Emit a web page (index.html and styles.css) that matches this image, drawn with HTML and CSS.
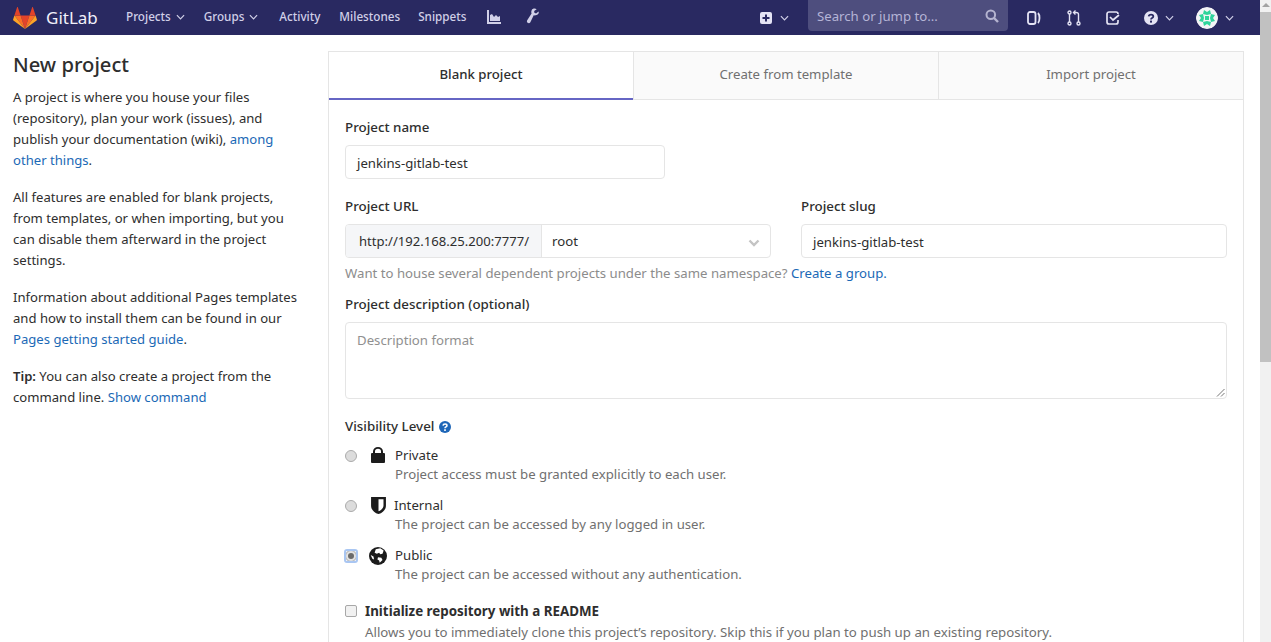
FILE: index.html
```html
<!DOCTYPE html>
<html lang="en">
<head>
<meta charset="utf-8">
<title>New project</title>
<link rel="stylesheet" href="styles.css">
</head>
<body>
<div class="page">
  <div class="viewport">
    <header class="nav">
      <a class="brand">
        <svg class="logo" viewBox="0 0 24 22" width="24" height="24"><path fill="#e24329" d="M12 22l4.400-13.600H7.600z"/><path fill="#fc6d26" d="M12 22L7.600 8.400H1.400z"/><path fill="#fca326" d="M1.400 8.400L.1 12.500c-.1.4 0 .8.3 1L12 22z"/><path fill="#e24329" d="M1.400 8.400h6.200L4.900.4c-.1-.4-.7-.4-.9 0z"/><path fill="#fc6d26" d="M12 22l4.400-13.600h6.200z"/><path fill="#fca326" d="M22.600 8.400l1.300 4.100c.1.4 0 .8-.3 1L12 22z"/><path fill="#e24329" d="M22.600 8.400h-6.200L19.100.4c.1-.4.7-.4.9 0z"/></svg>
        <span class="brand-name">GitLab</span>
      </a>
      <nav class="links">
        <a class="link">Projects <svg class="chev" viewBox="0 0 10 6"><path d="M1 1l4 4 4-4"/></svg></a>
        <a class="link groups">Groups <svg class="chev" viewBox="0 0 10 6"><path d="M1 1l4 4 4-4"/></svg></a>
        <a class="link">Activity</a>
        <a class="link milestones">Milestones</a>
        <a class="link snippets">Snippets</a>
        <svg class="nav-icon" viewBox="0 0 14 14" width="14" height="14"><path fill="#d1d0e8" d="M0 0h2v12h12v2H0z"/><path fill="#d1d0e8" d="M3 11V5l2-1 2 3 2-2 2 2 2-1v5z"/></svg>
        <svg class="nav-icon wrench" viewBox="0 0 14 16" width="13" height="16"><path fill="#d1d0e8" d="M13.500 3.200L10.800 5.400 9 4.500 8.800 2.500 11.500.6C9.500-.4 7-.1 6.100 1.700 5.500 3 5.600 4.300 6 5.300L1.300 12.500c-.6 1-.3 2.200.6 2.900 1 .6 2.200.3 2.800-.6L8.300 7.300c1.900.2 3.900-.3 5-1.800.6-.7.5-1.500.2-2.300z"/></svg>
      </nav>
      <div class="nav-right">
        <span class="plus-item">
          <svg viewBox="0 0 14 14" width="14" height="14"><path fill="#e4e3f4" fill-rule="evenodd" d="M3 1h8a2 2 0 0 1 2 2v8a2 2 0 0 1-2 2H3a2 2 0 0 1-2-2V3a2 2 0 0 1 2-2zm3 2.500V6H3.500v2H6v2.500h2V8h2.500V6H8V3.500z"/></svg>
          <svg class="chev" viewBox="0 0 10 6"><path d="M1 1l4 4 4-4"/></svg>
        </span>
        <div class="search">
          <span class="search-text">Search or jump to...</span>
          <svg viewBox="0 0 14 14" width="14" height="14"><circle cx="5.800" cy="5.800" r="4.300" fill="none" stroke="#b5b4d0" stroke-width="2"/><path d="M9 9l4 4" stroke="#b5b4d0" stroke-width="2.400"/></svg>
        </div>
        <svg class="r-icon r1" viewBox="0 0 14 14" width="14" height="14"><rect x="1" y="1" width="7.500" height="12" rx="2" fill="none" stroke="#e4e3f4" stroke-width="1.800"/><path d="M11 2c2 2 2 8 0 10" fill="none" stroke="#e4e3f4" stroke-width="1.800"/></svg>
        <svg class="r-icon r2" viewBox="0 0 14 16" width="14" height="16"><g fill="none" stroke="#e4e3f4" stroke-width="1.400"><circle cx="2.500" cy="2.500" r="1.500"/><circle cx="2.500" cy="13.500" r="1.500"/><circle cx="11.500" cy="13.500" r="1.500"/><path d="M2.500 4v8M11.500 12V4.500C11.500 3 10.500 2.500 9 2.500H7"/><path d="M8.500.5L6.500 2.500l2 2"/></g></svg>
        <svg class="r-icon r3" viewBox="0 0 14 14" width="14" height="14"><path fill="none" stroke="#e4e3f4" stroke-width="1.700" d="M12 9v2a2 2 0 0 1-2 2H3a2 2 0 0 1-2-2V3a2 2 0 0 1 2-2h7a2 2 0 0 1 2 2M4 6l3 3 6-5"/></svg>
        <span class="help-item">
          <svg viewBox="0 0 14 14" width="14" height="14"><circle cx="7" cy="7" r="7" fill="#e4e3f4"/><path d="M4.700 5.400C4.900 3 9.300 3 9.300 5.400c0 1.700-2.300 1.400-2.300 3" fill="none" stroke="#292961" stroke-width="1.800"/><rect x="6" y="9.600" width="2" height="2" fill="#292961"/></svg>
          <svg class="chev" viewBox="0 0 10 6"><path d="M1 1l4 4 4-4"/></svg>
        </span>
        <span class="avatar-item">
          <svg class="avatar" viewBox="0 0 22 22" width="22" height="22"><circle cx="11" cy="11" r="11" fill="#f4f4f6"/><g fill="#2fd59b"><path d="M8 3l3 2 3-2 1 4-4 1-4-1zM8 19l3-2 3 2 1-4-4-1-4 1zM3 8l2 3-2 3 4 1 1-4-1-4zM19 8l-2 3 2 3-4 1-1-4 1-4z"/><rect x="9" y="9" width="4" height="4"/></g></svg>
          <svg class="chev" viewBox="0 0 10 6"><path d="M1 1l4 4 4-4"/></svg>
        </span>
      </div>
    </header>
    <main class="content">
      <aside class="intro">
        <h1 class="title">New project</h1>
        <p class="para">A project is where you house your files (repository), plan your work (issues), and publish your documentation (wiki), <a class="anchor">among other things</a>.</p>
        <p class="para">All features are enabled for blank projects, from templates, or when importing, but you can disable them afterward in the project settings.</p>
        <p class="para">Information about additional Pages templates and how to install them can be found in our <a class="anchor">Pages getting started guide</a>.</p>
        <p class="para"><b class="tip">Tip:</b> You can also create a project from the command line. <a class="anchor">Show command</a></p>
      </aside>
      <section class="panel">
        <div class="tabs">
          <div class="tab active">Blank project</div>
          <div class="tab">Create from template</div>
          <div class="tab">Import project</div>
        </div>
        <form class="form">
          <label class="label">Project name</label>
          <div class="input name-input">jenkins-gitlab-test</div>
          <div class="url-row">
            <div class="url-col">
              <label class="label">Project URL</label>
              <div class="group">
                <span class="addon">http://192.168.25.200:7777/</span>
                <span class="select">root<svg class="sel-chev" viewBox="0 0 12 8" width="12" height="8"><path d="M1.500 1.500L6 6l4.500-4.500" fill="none" stroke="#c4c4c4" stroke-width="2.400"/></svg></span>
              </div>
            </div>
            <div class="slug-col">
              <label class="label">Project slug</label>
              <div class="input">jenkins-gitlab-test</div>
            </div>
          </div>
          <p class="help">Want to house several dependent projects under the same namespace? <a class="anchor">Create a group.</a></p>
          <label class="label">Project description (optional)</label>
          <div class="textarea">Description format
            <svg class="grip" viewBox="0 0 9 9" width="9" height="9"><path d="M8.500 1L1 8.500M8.500 5L5 8.500" stroke="#777" stroke-width="1"/></svg>
          </div>
          <div class="vis-label"><label class="label inline">Visibility Level</label>
            <svg viewBox="0 0 14 14" width="12" height="12"><circle cx="7" cy="7" r="7" fill="#1f67b8"/><path d="M4.700 5.400C4.900 3 9.300 3 9.300 5.400c0 1.700-2.300 1.400-2.300 3" fill="none" stroke="#fff" stroke-width="1.800"/><rect x="6" y="9.600" width="2" height="2" fill="#fff"/></svg>
          </div>
          <div class="vis">
            <span class="radio"></span>
            <span class="vis-icon"><svg viewBox="0 0 14 16" width="14" height="16"><path fill="#1c1c1c" fill-rule="evenodd" d="M2 6V4.500a5 4.500 0 0 1 10 0V6h1a1 1 0 0 1 1 1v8a1 1 0 0 1-1 1H1a1 1 0 0 1-1-1V7a1 1 0 0 1 1-1zm2 0h6V4.500a3 2.700 0 0 0-6 0z"/></svg></span>
            <div><div class="vis-name">Private</div><div class="vis-desc">Project access must be granted explicitly to each user.</div></div>
          </div>
          <div class="vis">
            <span class="radio"></span>
            <span class="vis-icon"><svg viewBox="0 0 14 16" width="15" height="17"><path fill="#1c1c1c" fill-rule="evenodd" d="M0 0h14v8c0 4-3 7-7 8-4-1-7-4-7-8zm7 2v11.500c2.500-1 4.700-3 4.700-5.500V2z"/></svg></span>
            <div><div class="vis-name shifted">Internal</div><div class="vis-desc">The project can be accessed by any logged in user.</div></div>
          </div>
          <div class="vis">
            <span class="radio checked"></span>
            <span class="vis-icon"><svg viewBox="0 0 16 16" width="18" height="18"><circle cx="8" cy="8" r="8" fill="#1c1c1c"/><path fill="#fff" d="M6 2l4-1 3 2-1 3-2 .5L9 5 7 6 5 5zM8 9l3 .5 1 2-2.500 2.500L9 12 7.500 11zM1.500 7L4 8.500 4.500 11 3 10.500z"/></svg></span>
            <div><div class="vis-name">Public</div><div class="vis-desc">The project can be accessed without any authentication.</div></div>
          </div>
          <div class="readme">
            <span class="check"></span>
            <div><div class="readme-title">Initialize repository with a README</div><div class="vis-desc wide">Allows you to immediately clone this project’s repository. Skip this if you plan to push up an existing repository.</div></div>
          </div>
        </form>
      </section>
    </main>
  </div>
  <div class="scrollbar"><span class="arrow"></span><span class="thumb"></span></div>
</div>
</body>
</html>
```
FILE: styles.css
```css
* { box-sizing: border-box; }
html, body { margin: 0; height: 642px; overflow: hidden; background: #fff; }
body { font-family: "Noto Sans", "Open Sans", sans-serif; font-size: 13.2px; line-height: 21px; color: #2e2e2e; }
.page { display: flex; height: 642px; }
.viewport { width: 1260px; flex: none; overflow: hidden; }
.scrollbar { width: 11px; background: #f1f1f1; display: flex; flex-direction: column; align-items: center; }
.arrow { width: 0; height: 0; border: 4px solid transparent; border-top: 0; border-bottom: 4px solid #a3a3a3; margin: 3px 0 5px; }
.thumb { width: 100%; height: 350px; background: #c1c1c1; }

.nav { height: 35px; background: #292961; display: flex; align-items: center; color: #d1d0e8; padding-left: 13px; }
.brand { display: flex; align-items: center; gap: 9px; width: 113px; }
.brand-name { font-size: 17px; color: #f1f0fa; }
.links { display: flex; align-items: center; font-size: 11.7px; font-weight: 500; padding-bottom: 2px; }
.link { margin-right: 19px; display: flex; align-items: center; gap: 5px; }
.link.groups { margin-right: 21px; }
.link.milestones { margin-right: 18px; }
.link.snippets { margin-right: 21px; }
.chev { width: 9px; height: 6px; fill: none; stroke: #d1d0e8; stroke-width: 1.300; }
.nav-icon { margin-right: 25px; }
.nav-icon.wrench { margin-top: -1px; }
.nav-right { margin-left: auto; display: flex; align-items: center; }
.plus-item, .help-item, .avatar-item { display: flex; align-items: center; gap: 7px; }
.search { width: 200px; height: 31px; margin: 0 0 4px 19px; align-self: flex-start; background: #4e4e7e; border-radius: 0 0 4px 4px; display: flex; align-items: center; justify-content: space-between; padding: 1px 9px 0 9px; color: #b5b4d6; font-size: 13.2px; }
.r-icon.r1 { margin-left: 19px; }
.r-icon.r2 { margin-left: 26px; }
.r-icon.r3 { margin-left: 25px; }
.help-item { margin-left: 24px; }
.avatar-item { margin: 0 26px 0 22px; }
.avatar { border-radius: 50%; }

.content { display: flex; padding: 16px 16px 0 13px; }
.intro { width: 288px; flex: none; margin-right: 27px; font-size: 13.1px; }
.title { font-size: 20.2px; font-weight: 500; line-height: 26px; margin: 0 0 10px; color: #2e2e2e; }
.para { margin: 0 0 16px; }
.tip { font-weight: 600; }
.anchor { color: #1b69b6; }
.panel { width: 916px; flex: none; border: 1px solid #e5e5e5; border-bottom: 0; height: 640px; }
.tabs { display: flex; height: 48px; }
.tab { flex: 1; display: flex; align-items: center; justify-content: center; background: #fafafa; color: #707070; border-left: 1px solid #e5e5e5; border-bottom: 1px solid #e5e5e5; padding-bottom: 2px; }
.tab.active { background: #fff; color: #2e2e2e; font-weight: 500; border-left: 0; border-bottom: 2px solid #6666c4; padding-bottom: 1px; }
.form { padding: 17px 16px 0; }
.label { display: block; font-size: 13.35px; font-weight: 500; line-height: 21px; margin-bottom: 7px; }
.label.inline { margin: 0; }
.input { height: 34px; border: 1px solid #e5e5e5; border-radius: 4px; padding: 2px 10px 0 11px; display: flex; align-items: center; }
.name-input { width: 320px; margin-bottom: 17px; }
.url-row { display: flex; gap: 30px; }
.url-col { width: 426px; }
.slug-col { flex: 1; }
.group { display: flex; height: 34px; border: 1px solid #e5e5e5; border-radius: 4px; }
.addon { width: 196px; background: #f5f6f8; border-right: 1px solid #e5e5e5; padding-left: 13px; display: flex; align-items: center; border-radius: 3px 0 0 3px; font-size: 13.1px; }
.select { flex: 1; padding: 0 10px; display: flex; align-items: center; justify-content: space-between; }
.sel-chev { margin-top: 3px; }
.help { margin: 5px 0 10px; color: #8c8c8c; }
.textarea { height: 77px; border: 1px solid #e5e5e5; border-radius: 4px; padding: 7px 11px; color: #909090; display: flex; justify-content: space-between; }
.grip { align-self: flex-end; margin: 0 -10px -6px 0; }
.vis-label { display: flex; align-items: center; gap: 5px; margin: 17px 0 8px; }
.vis { display: flex; height: 50px; }
.radio { width: 12px; height: 12px; margin: 5px 0 0 0; border-radius: 50%; background: #dcdcdc; border: 1px solid #ababab; flex: none; position: relative; }
.radio.checked { background: #e3e3e3; }
.radio.checked::before { content: ""; position: absolute; inset: -2px; border: 2px solid #a9c6f2; border-radius: 3px; }
.radio.checked::after { content: ""; display: block; width: 6px; height: 6px; margin: 2px; border-radius: 50%; background: #6b6b6b; }
.vis-icon { width: 38px; flex: none; display: flex; justify-content: center; padding: 2px 0 0 4px; height: 20px; }
.vis-name { line-height: 20px; color: #2e2e2e; }
.vis-name.shifted { margin-left: -1px; }
.vis-desc { line-height: 19px; color: #707070; }
.vis-desc.wide { font-size: 13.25px; }
.readme { display: flex; gap: 8px; margin-top: 6px; }
.check { width: 12px; height: 12px; margin-top: 4px; border: 1px solid #a8a8a8; border-radius: 2px; background: #f1f1f1; flex: none; }
.readme-title { font-size: 13.35px; font-weight: 700; line-height: 21px; }
.readme .vis-desc { margin-top: 1px; }
```
